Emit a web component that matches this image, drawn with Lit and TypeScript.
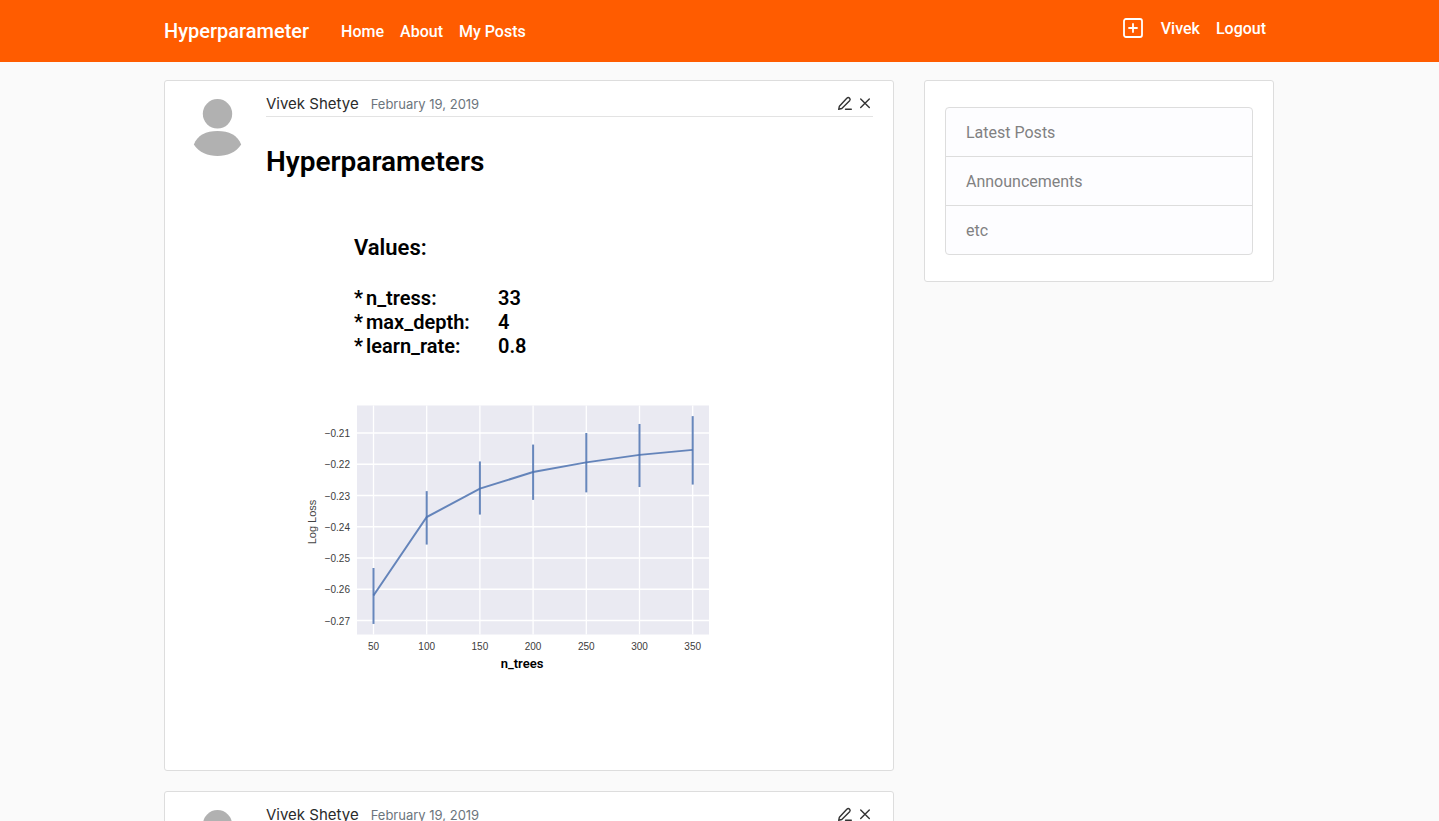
import { LitElement, html, svg, css, nothing } from "lit";
import { customElement, property } from "lit/decorators.js";

interface Param {
  name: string;
  value: string;
}

interface Sample {
  trees: number;
  loss: number;
  low: number;
  high: number;
}

const params: Param[] = [
  { name: "n_tress:", value: "33" },
  { name: "max_depth:", value: "4" },
  { name: "learn_rate:", value: "0.8" },
];

const samples: Sample[] = [
  { trees: 50, loss: -0.262, low: -0.2711, high: -0.2532 },
  { trees: 100, loss: -0.2369, low: -0.2457, high: -0.2286 },
  { trees: 150, loss: -0.2278, low: -0.2361, high: -0.2191 },
  { trees: 200, loss: -0.2225, low: -0.2314, high: -0.2137 },
  { trees: 250, loss: -0.2194, low: -0.229, high: -0.21 },
  { trees: 300, loss: -0.217, low: -0.2273, high: -0.2071 },
  { trees: 350, loss: -0.2154, low: -0.2265, high: -0.2046 },
];

const lossTicks = [0.21, 0.22, 0.23, 0.24, 0.25, 0.26, 0.27];

@customElement("loss-chart")
export class LossChart extends LitElement {
  static styles = css`
    :host {
      display: block;
    }
    .chart {
      display: block;
      width: 100%;
      height: auto;
    }
    .plot {
      fill: #eaeaf2;
    }
    .grid {
      stroke: #fff;
      stroke-width: 1.3;
    }
    .series {
      fill: none;
      stroke: #4c72b0;
      stroke-width: 2;
      opacity: 0.85;
    }
    .tick {
      font: 10px "Liberation Sans", Arial, sans-serif;
      fill: #3c3c3c;
    }
    .end {
      text-anchor: end;
    }
    .middle {
      text-anchor: middle;
    }
    .label {
      font: 11px "Liberation Sans", Arial, sans-serif;
      fill: #444;
      text-anchor: middle;
    }
    .caption {
      font: 600 13px Roboto, sans-serif;
      fill: #000;
      text-anchor: middle;
    }
  `;

  private x(trees: number) {
    return 73.5 + ((trees - 50) / 50) * 53.2;
  }

  private y(loss: number) {
    return 33 + ((-0.21 - loss) / 0.01) * 31.25;
  }

  render() {
    const line = samples.map((s) => `${this.x(s.trees)},${this.y(s.loss)}`).join(" ");
    return html`
      <svg class="chart" viewBox="0 0 420 280" role="img" aria-label="Log Loss, n_trees">
        <rect class="plot" x="57" y="5.5" width="352" height="229"></rect>
        ${lossTicks.map(
          (t) => svg`
            <line class="grid" x1="57" x2="409" y1=${this.y(-t)} y2=${this.y(-t)}></line>
            <text class="tick end" x="50" y=${this.y(-t) + 4}>−${t.toFixed(2)}</text>`
        )}
        ${samples.map(
          (s) => svg`
            <line class="grid" x1=${this.x(s.trees)} x2=${this.x(s.trees)} y1="5.5" y2="234.5"></line>
            <text class="tick middle" x=${this.x(s.trees)} y="250">${s.trees}</text>`
        )}
        ${samples.map(
          (s) => svg`
            <line class="series" x1=${this.x(s.trees)} x2=${this.x(s.trees)}
              y1=${this.y(s.high)} y2=${this.y(s.low)}></line>`
        )}
        <polyline class="series" points=${line}></polyline>
        <text class="label" transform="translate(16 122) rotate(-90)">Log Loss</text>
        <text class="caption" x="222" y="268">n_trees</text>
      </svg>
    `;
  }
}

@customElement("post-card")
export class PostCard extends LitElement {
  @property() author = "";
  @property() date = "";
  @property() heading = "";

  static styles = css`
    :host {
      display: block;
      box-sizing: border-box;
      padding: 10px 20px;
      background: #fff;
      border: 1px solid #ddd;
      border-radius: 3px;
    }
    .media {
      display: flex;
      align-items: flex-start;
      gap: 16px;
    }
    .avatar {
      flex: none;
      width: 65px;
      height: 74px;
      fill: #b1b1b1;
    }
    .body {
      flex: 1;
      min-width: 0;
    }
    .meta {
      display: flex;
      align-items: center;
      gap: 12px;
      height: 25px;
      border-bottom: 1px solid #e3e3e3;
      font-family: Inter, Roboto, sans-serif;
    }
    .author {
      color: #2b2b2b;
      font-size: 15px;
      line-height: 24px;
      text-decoration: none;
    }
    .date {
      color: #6c757d;
      font-size: 13px;
      line-height: 24px;
    }
    .tools {
      display: flex;
      gap: 4px;
      margin-left: auto;
    }
    .tool {
      display: block;
      width: 16px;
      height: 16px;
      padding: 0;
      border: 0;
      background: none;
      color: #333;
      cursor: pointer;
    }
    .glyph {
      display: block;
      width: 16px;
      height: 16px;
      fill: none;
      stroke: currentColor;
      stroke-width: 1.4;
      stroke-linecap: round;
      stroke-linejoin: round;
    }
    .heading {
      margin: 28px 0 0;
      color: #000;
      font-size: 28px;
      font-weight: 600;
      line-height: 34px;
      font-family: Roboto, sans-serif;
    }
    .content {
      min-height: 160px;
    }
  `;

  render() {
    return html`
      <article class="media">
        <svg class="avatar" viewBox="0 0 65 74" role="img" aria-label="Avatar">
          <circle cx="32.5" cy="22.800" r="14.700"></circle>
          <path d="M8.800 53.500C12.500 44 21 40 32.500 40S52.500 44 56.200 53.500C51 61.500 42 65 32.500 65S14 61.500 8.800 53.500Z"></path>
        </svg>
        <div class="body">
          <header class="meta">
            <a class="author" href="#">${this.author}</a>
            <time class="date">${this.date}</time>
            <div class="tools">
              <button class="tool" aria-label="Edit">
                <svg class="glyph" viewBox="0 0 16 16">
                  <path d="M1.700 13.300L2.400 10.200L9.800 2.300Q11.200 1 12.500 2.100T12.600 4.700L4.800 12.500Z"></path>
                  <path d="M8.500 13.300H14.300"></path>
                </svg>
              </button>
              <button class="tool" aria-label="Delete">
                <svg class="glyph" viewBox="0 0 16 16">
                  <path d="M3.700 3L12.300 11.600M12.300 3L3.700 11.600"></path>
                </svg>
              </button>
            </div>
          </header>
          ${this.heading ? html`<h2 class="heading">${this.heading}</h2>` : nothing}
          <div class="content"><slot></slot></div>
        </div>
      </article>
    `;
  }
}

@customElement("app-root")
export class AppRoot extends LitElement {
  static styles = css`
    :host {
      display: block;
      height: 100vh;
      overflow-y: auto;
      scrollbar-width: none;
      background: #fafafa;
      color: #333;
      font-family: Roboto, sans-serif;
      font-size: 16px;
      line-height: 24px;
    }
    .bar {
      background: #ff5c00;
    }
    .container {
      box-sizing: border-box;
      max-width: 1141px;
      margin: 0 auto;
      padding: 0 16px 0 15px;
    }
    .nav {
      display: flex;
      align-items: center;
      height: 62px;
    }
    .brand,
    .link {
      color: #fff;
      font-weight: 500;
      text-decoration: none;
    }
    .brand {
      margin-right: 24px;
      font-size: 20px;
      line-height: 30px;
    }
    .link {
      padding: 9px 8px 7px;
    }
    .account {
      display: flex;
      align-items: center;
      margin-left: auto;
      padding-bottom: 6px;
    }
    .add {
      display: block;
      margin-right: 10px;
      padding: 0;
      border: 0;
      background: none;
      cursor: pointer;
    }
    .add-icon {
      display: block;
      width: 20px;
      height: 20px;
      fill: none;
      stroke: #fff;
      stroke-width: 1.8;
      stroke-linecap: round;
    }
    .columns {
      display: grid;
      grid-template-columns: minmax(0, 73fr) minmax(0, 35fr);
      align-items: start;
      gap: 30px;
      padding-top: 18px;
      padding-bottom: 20px;
    }
    .posts {
      display: grid;
      gap: 20px;
    }
    .values {
      padding: 53px 0 0 88px;
      color: #000;
    }
    .subtitle {
      margin: 0 0 22px;
      font-size: 22px;
      font-weight: 600;
      line-height: 32px;
    }
    .table {
      border-collapse: collapse;
      font-size: 20px;
      line-height: 24px;
      text-align: left;
    }
    .star,
    .param,
    .value {
      padding: 0;
      font-weight: 600;
    }
    .star {
      width: 12px;
    }
    .param {
      width: 132px;
    }
    .chart {
      max-width: 420px;
      margin: 42px 0 80px 34px;
    }
    .side {
      padding: 26px 20px;
      background: #fff;
      border: 1px solid #ddd;
      border-radius: 3px;
    }
    .list {
      margin: 0;
      padding: 0;
      list-style: none;
      border: 1px solid #ddd;
      border-radius: 4px;
      background: #fdfdff;
      overflow: hidden;
    }
    .item + .item {
      border-top: 1px solid #ddd;
    }
    .item-link {
      display: block;
      padding: 13px 20px 11px;
      color: #818182;
      text-decoration: none;
    }
  `;

  render() {
    return html`
      <header class="bar">
        <nav class="container nav">
          <a class="brand" href="#">Hyperparameter</a>
          <a class="link" href="#">Home</a>
          <a class="link" href="#">About</a>
          <a class="link" href="#">My Posts</a>
          <div class="account">
            <button class="add" aria-label="New post">
              <svg class="add-icon" viewBox="0 0 20 20">
                <rect x="1" y="1" width="18" height="18" rx="2"></rect>
                <path d="M10 6V14M6 10H14"></path>
              </svg>
            </button>
            <a class="link" href="#">Vivek</a>
            <a class="link" href="#">Logout</a>
          </div>
        </nav>
      </header>
      <main class="container columns">
        <section class="posts">
          <post-card author="Vivek Shetye" date="February 19, 2019" heading="Hyperparameters">
            <div class="values">
              <h3 class="subtitle">Values:</h3>
              <table class="table">
                ${params.map(
                  (p) => html`<tr>
                    <td class="star">*</td>
                    <th class="param" scope="row">${p.name}</th>
                    <td class="value">${p.value}</td>
                  </tr>`
                )}
              </table>
            </div>
            <loss-chart class="chart"></loss-chart>
          </post-card>
          <post-card author="Vivek Shetye" date="February 19, 2019"></post-card>
        </section>
        <aside class="side">
          <ul class="list">
            ${["Latest Posts", "Announcements", "etc"].map(
              (t) => html`<li class="item"><a class="item-link" href="#">${t}</a></li>`
            )}
          </ul>
        </aside>
      </main>
    `;
  }
}
